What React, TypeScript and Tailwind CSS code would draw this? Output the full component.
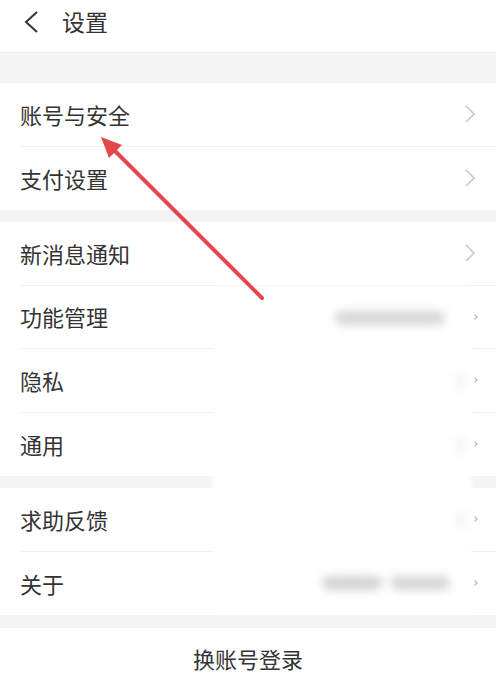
import React from 'react';

type Row = { label: string; big?: boolean };

const Chevron: React.FC<{ big?: boolean }> = ({ big }) =>
    big ? (
        <svg width="12" height="20" viewBox="0 0 12 20" className="shrink-0">
            <path d="M2 2 L10 10 L2 18" fill="none" stroke="#c8c8c8" strokeWidth="1.6" />
        </svg>
    ) : (
        <svg width="6" height="8" viewBox="0 0 6 8" className="shrink-0">
            <path d="M1.5 1.5 L4 4 L1.5 6.5" fill="none" stroke="#b5b5b5" strokeWidth="1.2" />
        </svg>
    );

const Group: React.FC<{ rows: Row[] }> = ({ rows }) => (
    <div className="bg-white">
        {rows.map((row, i) => (
            <div key={row.label} className="pl-5">
                <div
                    className={
                        'h-[63.5px] flex items-center justify-between ' +
                        (i < rows.length - 1 ? 'border-b border-[#f0f0f0]' : '')
                    }
                >
                    <span className="text-[22px] text-[#333333]">{row.label}</span>
                    <div className={row.big ? 'w-[32px] flex items-center' : 'w-[24px] flex items-center pl-[1px]'}>
                        <Chevron big={row.big} />
                    </div>
                </div>
            </div>
        ))}
    </div>
);

const App: React.FC = () => {
    return (
        <div
            className="relative w-[496px] h-[685px] bg-[#f4f4f4] overflow-hidden"
            style={{ fontFamily: '"Noto Sans CJK SC", "Noto Sans", sans-serif' }}
        >
            {/* Header */}
            <div className="h-[53px] bg-white flex items-center pb-[9px] border-b border-[#ececec]">
                <svg width="20" height="26" viewBox="0 0 20 26" className="ml-[21px]">
                    <path d="M16 3 L5 13 L16 23" fill="none" stroke="#333333" strokeWidth="2" />
                </svg>
                <span className="ml-[21px] text-[23px] text-[#333333]">设置</span>
            </div>

            <div className="h-[30px]" />

            <Group rows={[{ label: '账号与安全', big: true }, { label: '支付设置', big: true }]} />
            <div className="h-[12px]" />
            <Group
                rows={[
                    { label: '新消息通知', big: true },
                    { label: '功能管理' },
                    { label: '隐私' },
                    { label: '通用' },
                ]}
            />
            <div className="h-[12px]" />
            <Group rows={[{ label: '求助反馈' }, { label: '关于' }]} />
            <div className="h-[13px]" />

            <div className="bg-white h-[60px] flex items-center justify-center">
                <span className="text-[22px] text-[#333333]">换账号登录</span>
            </div>

            {/* blurred privacy overlay */}
            <div className="absolute left-[213px] top-[286px] w-[258px] h-[327px] bg-white blur-[3px]" />
            <div className="absolute left-[335px] top-[311px] w-[110px] h-[14px] bg-[#d6d6d6] blur-[5px] rounded-full" />
            <div className="absolute left-[322px] top-[576px] w-[60px] h-[14px] bg-[#d2d2d2] blur-[5px] rounded-full" />
            <div className="absolute left-[390px] top-[576px] w-[60px] h-[14px] bg-[#d6d6d6] blur-[5px] rounded-full" />
            <div className="absolute left-[455px] top-[372px] w-[12px] h-[18px] bg-[#f7f7f7] blur-[4px]" />
            <div className="absolute left-[455px] top-[436px] w-[12px] h-[18px] bg-[#f7f7f7] blur-[4px]" />
            <div className="absolute left-[455px] top-[511px] w-[12px] h-[18px] bg-[#f7f7f7] blur-[4px]" />

            {/* red arrow */}
            <svg className="absolute left-0 top-0" width="496" height="685" viewBox="0 0 496 685">
                <line x1="262" y1="298" x2="114" y2="150" stroke="#e0484a" strokeWidth="4" strokeLinecap="round" />
                <polygon points="101,137 122,145 109,158" fill="#e0484a" />
            </svg>
        </div>
    );
};

export default App;
